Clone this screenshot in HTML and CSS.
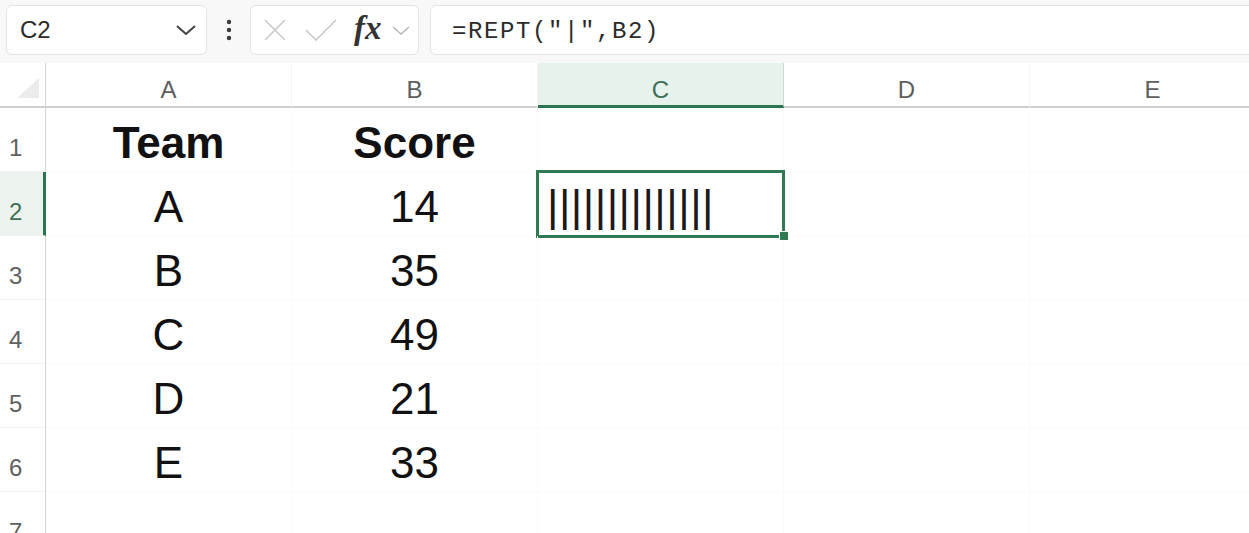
FILE: index.html
```html
<!DOCTYPE html>
<html lang="en">
<head>
<meta charset="utf-8">
<title>REPT sheet</title>
<link rel="stylesheet" href="styles.css">
</head>
<body>
<div class="toolbar">
  <div class="namebox">
    <span class="namebox-text">C2</span>
    <svg class="namebox-chev" width="20" height="10" viewBox="0 0 20 10"><path d="M1 1 L10 9 L19 1" fill="none" stroke="#444" stroke-width="2"/></svg>
  </div>
  <div class="kebab">
    <svg width="6" height="22" viewBox="0 0 6 22"><circle cx="3" cy="3" r="2.2" fill="#3a3a3a"/><circle cx="3" cy="11" r="2.2" fill="#3a3a3a"/><circle cx="3" cy="19" r="2.2" fill="#3a3a3a"/></svg>
  </div>
  <div class="fxbtns">
    <svg class="ic-x" width="22" height="22" viewBox="0 0 22 22"><path d="M1 1 L21 21 M21 1 L1 21" fill="none" stroke="#c9c9c9" stroke-width="1.6"/></svg>
    <svg class="ic-check" width="32" height="22" viewBox="0 0 32 22"><path d="M1 11 L11 21 L31 1" fill="none" stroke="#c9c9c9" stroke-width="1.6"/></svg>
    <span class="fx">fx</span>
    <svg class="ic-chev" width="18" height="10" viewBox="0 0 18 10"><path d="M1 1 L9 8 L17 1" fill="none" stroke="#b5b5b5" stroke-width="1.5"/></svg>
  </div>
  <div class="formula">=REPT("|",B2)</div>
</div>

<div class="sheet">
  <div class="corner"><span class="corner-tri"></span></div>
  <div class="colhead">A</div>
  <div class="colhead">B</div>
  <div class="colhead colhead-sel">C</div>
  <div class="colhead">D</div>
  <div class="colhead">E</div>

  <div class="rowhead">1</div>
  <div class="cell bold">Team</div>
  <div class="cell bold">Score</div>
  <div class="cell"></div>
  <div class="cell"></div>
  <div class="cell"></div>

  <div class="rowhead rowhead-sel">2</div>
  <div class="cell">A</div>
  <div class="cell">14</div>
  <div class="cell cell-sel"><span class="bars">||||||||||||||</span><span class="handle"></span></div>
  <div class="cell"></div>
  <div class="cell"></div>

  <div class="rowhead">3</div>
  <div class="cell">B</div>
  <div class="cell">35</div>
  <div class="cell"></div>
  <div class="cell"></div>
  <div class="cell"></div>

  <div class="rowhead">4</div>
  <div class="cell">C</div>
  <div class="cell">49</div>
  <div class="cell"></div>
  <div class="cell"></div>
  <div class="cell"></div>

  <div class="rowhead">5</div>
  <div class="cell">D</div>
  <div class="cell">21</div>
  <div class="cell"></div>
  <div class="cell"></div>
  <div class="cell"></div>

  <div class="rowhead">6</div>
  <div class="cell">E</div>
  <div class="cell">33</div>
  <div class="cell"></div>
  <div class="cell"></div>
  <div class="cell"></div>

  <div class="rowhead">7</div>
  <div class="cell"></div>
  <div class="cell"></div>
  <div class="cell"></div>
  <div class="cell"></div>
  <div class="cell"></div>
</div>
</body>
</html>
```

FILE: styles.css
```css
html, body {
  margin: 0;
  padding: 0;
}
body {
  width: 1249px;
  height: 533px;
  overflow: hidden;
  background: #ffffff;
  font-family: "Liberation Sans", Arial, sans-serif;
  color: #111;
}

/* toolbar */
.toolbar {
  height: 63px;
  box-sizing: border-box;
  padding: 5px 0 0 6px;
  background: #f8f8f8;
  display: flex;
  align-items: flex-start;
}
.namebox {
  width: 201px;
  height: 50px;
  box-sizing: border-box;
  background: #fff;
  border: 1px solid #e4e4e4;
  border-radius: 6px;
  display: flex;
  align-items: center;
  padding: 0 10px 0 13px;
}
.namebox-text {
  font-size: 24px;
  color: #2b2b2b;
  flex: 1;
}
.namebox-chev {
  display: block;
}
.kebab {
  width: 43px;
  height: 50px;
  display: flex;
  align-items: center;
  justify-content: center;
}
.kebab svg { display: block; }
.fxbtns {
  width: 169px;
  height: 50px;
  box-sizing: border-box;
  background: #fff;
  border: 1px solid #e4e4e4;
  border-radius: 6px;
  display: flex;
  align-items: center;
}
.ic-x { margin-left: 13px; display: block; }
.ic-check { margin-left: 19px; display: block; }
.fx {
  margin-left: 17px;
  font-family: "Liberation Serif", "Times New Roman", serif;
  font-style: italic;
  font-weight: bold;
  font-size: 33px;
  line-height: 1;
  color: #333;
  margin-top: -4px;
}
.ic-chev { margin-left: 10px; display: block; margin-top: 2px; }
.formula {
  flex: 1;
  margin-left: 11px;
  margin-right: -12px;
  height: 50px;
  box-sizing: border-box;
  background: #fff;
  border: 1px solid #e4e4e4;
  border-radius: 6px;
  display: flex;
  align-items: center;
  padding-left: 21px;
  font-family: "Liberation Mono", "Courier New", monospace;
  font-size: 24px;
  letter-spacing: 1.6px;
  color: #2b2b2b;
  padding-top: 2px;
}

/* sheet grid */
.sheet {
  display: grid;
  grid-template-columns: 46px repeat(5, 246px);
  grid-template-rows: 45px repeat(7, 64px);
  background: #fff;
}
.corner {
  border-right: 1px solid #d4d4d4;
  border-bottom: 2px solid #cfcfcf;
  display: flex;
  align-items: flex-end;
  justify-content: flex-end;
  padding: 0 6px 8px 0;
}
.corner-tri {
  width: 0;
  height: 0;
  border-left: 22px solid transparent;
  border-bottom: 20px solid #ebebeb;
}
.colhead {
  border-bottom: 2px solid #cfcfcf;
  border-right: 1px solid #f4f4f4;
  display: flex;
  align-items: flex-end;
  justify-content: center;
  padding-bottom: 2px;
  font-size: 24px;
  color: #5e5e5e;
}
.colhead-sel {
  background: #e6f3ec;
  border-bottom: 3px solid #2c7550;
  border-right: 1px solid #cfd8d3;
  padding-bottom: 1px;
  color: #3f6f56;
}
.rowhead {
  border-right: 1px solid #d4d4d4;
  border-bottom: 1px solid #f0f0f0;
  display: flex;
  align-items: flex-end;
  padding: 0 0 9px 9px;
  font-size: 24px;
  color: #606060;
}
.rowhead-sel {
  background: #ecf3ef;
  border-right: 3px solid #2c7550;
  color: #3f6f56;
}
.cell {
  border-right: 1px solid #fafafa;
  border-bottom: 1px solid #fafafa;
  display: flex;
  align-items: flex-end;
  justify-content: center;
  padding-bottom: 3px;
  font-size: 44px;
  color: #111;
  position: relative;
}
.bold {
  font-weight: bold;
}
.cell-sel {
  justify-content: flex-start;
  padding-left: 9px;
}
.cell-sel::after {
  content: "";
  position: absolute;
  left: -2px;
  top: -2px;
  right: -2px;
  bottom: -3px;
  border: 3px solid #2f7a52;
  pointer-events: none;
}
.bars {
  letter-spacing: 0.5px;
  color: #1a1a1a;
  margin-bottom: 1px;
}
.handle {
  position: absolute;
  right: -6px;
  bottom: -6px;
  width: 8px;
  height: 8px;
  background: #2f7a52;
  border: 1px solid #fff;
  z-index: 2;
}
```
